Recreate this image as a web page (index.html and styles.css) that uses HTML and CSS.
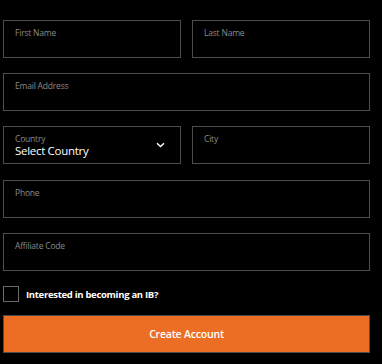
FILE: index.html
```html
<!DOCTYPE html>
<html lang="en">
<head>
  <meta charset="UTF-8">
  <meta name="viewport" content="width=device-width, initial-scale=1.0">
  <title>Register</title>
  <link rel="stylesheet" href="styles.css">
</head>
<body>
  <form class="signup">
    <div class="row">
      <label class="field">
        <span class="field-label">First Name</span>
        <input type="text" name="firstName">
      </label>
      <label class="field">
        <span class="field-label">Last Name</span>
        <input type="text" name="lastName">
      </label>
    </div>

    <label class="field">
      <span class="field-label">Email Address</span>
      <input type="email" name="email">
    </label>

    <div class="row">
      <label class="field select-field">
        <span class="field-label">Country</span>
        <span class="select-value">Select Country</span>
        <svg class="chevron" width="9" height="6" viewBox="0 0 9 6">
          <path d="M1 1.2 L4.5 4.6 L8 1.2" fill="none" stroke="#fff" stroke-width="1.4"/>
        </svg>
      </label>
      <label class="field">
        <span class="field-label">City</span>
        <input type="text" name="city">
      </label>
    </div>

    <label class="field spaced">
      <span class="field-label">Phone</span>
      <input type="tel" name="phone">
    </label>

    <label class="field">
      <span class="field-label">Affiliate Code</span>
      <input type="text" name="affiliate">
    </label>

    <label class="check">
      <span class="box"></span>
      <span>Interested in becoming an IB?</span>
    </label>

    <button type="button" class="submit">Create Account</button>
  </form>
</body>
</html>
```

FILE: styles.css
```css
* {
  margin: 0;
  padding: 0;
  box-sizing: border-box;
  font-family: 'Open Sans', sans-serif;
}

body {
  background-color: #000;
  color: #fff;
}

.signup {
  display: flex;
  flex-direction: column;
  gap: 15px;
  padding: 20px 12px 0 3px;
}

.row {
  display: grid;
  grid-template-columns: 1fr 1fr;
  gap: 11px;
}

.field {
  position: relative;
  display: block;
  height: 38px;
  border: 1px solid #4d4d4d;
  padding: 6px 11px 0;
}

.field.spaced {
  margin-top: 1px;
}

.field-label {
  display: block;
  font-size: 8.5px;
  line-height: 12px;
  color: #8a8a8a;
  letter-spacing: -0.2px;
}

.field input {
  display: block;
  width: 100%;
  background: transparent;
  border: none;
  outline: none;
  color: #fff;
  font-size: 11px;
}

.select-field {
  padding-top: 6px;
}

.select-field .field-label {
  line-height: 11px;
}

.select-value {
  display: block;
  font-size: 11.5px;
  line-height: 13px;
  color: #fff;
  letter-spacing: -0.3px;
}

.chevron {
  position: absolute;
  right: 15px;
  top: 15px;
}

.check {
  display: flex;
  align-items: center;
  gap: 7px;
  font-size: 9.5px;
  font-weight: bold;
  color: #fff;
  letter-spacing: -0.3px;
}

.check .box {
  width: 16px;
  height: 16px;
  border: 1px solid #6a6a6a;
}

.submit {
  height: 38px;
  margin-top: -2px;
  background-color: #ec6e24;
  border: 1px solid #4d4d4d;
  color: #fff;
  font-size: 10.5px;
  font-weight: 600;
  letter-spacing: -0.2px;
  cursor: pointer;
}
```
